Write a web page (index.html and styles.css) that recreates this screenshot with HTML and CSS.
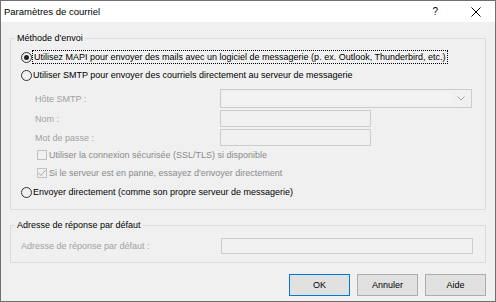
FILE: index.html
```html
<!DOCTYPE html>
<html lang="fr">
<head>
    <meta charset="UTF-8">
    <meta name="viewport" content="width=device-width, initial-scale=1.0">
    <title>Paramètres de courriel</title>
    <link rel="stylesheet" href="styles.css">
</head>
<body>
    <div class="dialog">
        <div class="titlebar">
            <span class="title">Paramètres de courriel</span>
            <span class="help">?</span>
            <span class="close">
                <svg width="10" height="10" viewBox="0 0 10 10">
                    <path d="M0.5 0.5 L9.5 9.5 M9.5 0.5 L0.5 9.5" stroke="#000" stroke-width="1" fill="none"/>
                </svg>
            </span>
        </div>

        <div class="content">
            <fieldset class="group group-method">
                <legend>Méthode d'envoi</legend>
                <div class="group-body">
                    <label class="radio-row">
                        <span class="radio checked"></span>
                        <span class="focus-text">Utilisez MAPI pour envoyer des mails avec un logiciel de messagerie (p. ex. Outlook, Thunderbird, etc.)</span>
                    </label>
                    <label class="radio-row">
                        <span class="radio"></span>
                        <span>Utiliser SMTP pour envoyer des courriels directement au serveur de messagerie</span>
                    </label>

                    <div class="smtp-fields">
                        <span class="field-label">Hôte SMTP :</span>
                        <div class="combo">
                            <span class="combo-field"></span>
                            <svg class="chevron" width="8" height="5" viewBox="0 0 8 5">
                                <path d="M0.5 0.5 L4 4 L7.5 0.5" stroke="#a6a6a6" fill="none"/>
                            </svg>
                        </div>
                        <span class="field-label">Nom :</span>
                        <div class="textbox short"></div>
                        <span class="field-label">Mot de passe :</span>
                        <div class="textbox short"></div>
                    </div>

                    <label class="check-row">
                        <span class="check"></span>
                        <span>Utiliser la connexion sécurisée (SSL/TLS) si disponible</span>
                    </label>
                    <label class="check-row">
                        <span class="check">
                            <svg width="8" height="8" viewBox="0 0 8 8">
                                <path d="M0.5 4 L3 6.5 L7.5 1" stroke="#a6a6a6" fill="none"/>
                            </svg>
                        </span>
                        <span>Si le serveur est en panne, essayez d'envoyer directement</span>
                    </label>
                    <label class="radio-row last">
                        <span class="radio"></span>
                        <span>Envoyer directement (comme son propre serveur de messagerie)</span>
                    </label>
                </div>
            </fieldset>

            <fieldset class="group group-reply">
                <legend>Adresse de réponse par défaut</legend>
                <div class="group-body reply-row">
                    <span class="field-label">Adresse de réponse par défaut :</span>
                    <div class="textbox wide"></div>
                </div>
            </fieldset>

            <div class="buttons">
                <button class="btn btn-default">OK</button>
                <button class="btn">Annuler</button>
                <button class="btn">Aide</button>
            </div>
        </div>
    </div>
</body>
</html>
```

FILE: styles.css
```css
* {
    box-sizing: border-box;
}

body {
    margin: 0;
    font-family: "Liberation Sans", Arial, sans-serif;
    font-size: 9px;
    color: #000;
    background: #f0f0f0;
}

.dialog {
    width: 496px;
    height: 302px;
    border: 1px solid #707070;
    background-color: #f0f0f0;
    display: flex;
    flex-direction: column;
}

/* barre de titre */
.titlebar {
    height: 21px;
    background-color: #fff;
    display: flex;
    align-items: center;
    padding-left: 3px;
}

.title {
    flex: 1;
    font-size: 9.5px;
}

.help {
    font-size: 10px;
    margin-right: 33px;
}

.close {
    display: flex;
    margin-right: 14px;
}

.content {
    padding: 10px 9px 0 9px;
}

/* groupes */
.group {
    margin: 0;
    padding: 4px 8px 8px 4px;
    border: 1px solid #dcdcdc;
    min-width: 0;
}

.group legend {
    padding: 0 2px;
    line-height: 12px;
}

.group-reply {
    margin-top: 9px;
    padding-top: 7px;
}

.group-body {
    padding-left: 6px;
}

.radio-row,
.check-row {
    height: 18px;
    display: flex;
    align-items: center;
    white-space: nowrap;
}

.radio-row.last {
    margin-top: 1px;
}

.radio {
    width: 11px;
    height: 11px;
    border: 1px solid #333;
    border-radius: 50%;
    margin-right: 1px;
    display: flex;
    align-items: center;
    justify-content: center;
    flex-shrink: 0;
}

.radio.checked::after {
    content: "";
    width: 5px;
    height: 5px;
    border-radius: 50%;
    background-color: #222;
}

.focus-text {
    border: 1px dotted #000;
    padding: 0 1px;
    line-height: 12px;
    margin-left: -1px;
}

.check-row {
    padding-left: 16px;
    color: #8a8a8a;
}

.check {
    width: 10px;
    height: 10px;
    border: 1px solid #c2c2c2;
    margin-right: 2px;
    display: flex;
    align-items: center;
    justify-content: center;
    flex-shrink: 0;
}

/* champs SMTP */
.smtp-fields {
    display: grid;
    grid-template-columns: 185px auto;
    grid-template-rows: 19px 17px 17px;
    row-gap: 2px;
    align-items: center;
    justify-items: start;
    margin-top: 5px;
    padding-left: 14px;
}

.field-label {
    color: #a0a0a0;
    white-space: nowrap;
}

.combo {
    width: 252px;
    height: 19px;
    border: 1px solid #cccccc;
    background-color: #f0f0f0;
    display: flex;
    align-items: center;
    padding: 2px 6px 2px 2px;
}

.combo-field {
    flex: 1;
    height: 100%;
    background-color: #f3f3f3;
    margin-right: 5px;
}

.textbox {
    height: 17px;
    border: 1px solid #cccccc;
    background-color: #f0f0f0;
}

.textbox.short {
    width: 151px;
}

.textbox.wide {
    width: 252px;
    height: 16px;
}

.reply-row {
    display: grid;
    grid-template-columns: 200px auto;
    align-items: center;
    height: 16px;
}

/* boutons */
.buttons {
    display: flex;
    justify-content: flex-end;
    gap: 7px;
    margin-top: 11px;
}

.btn {
    width: 61px;
    height: 22px;
    border: 1px solid #adadad;
    background-color: #e1e1e1;
    font-family: inherit;
    font-size: 9px;
    color: #000;
    padding: 0;
}

.btn-default {
    border-color: #0078d7;
}
```
